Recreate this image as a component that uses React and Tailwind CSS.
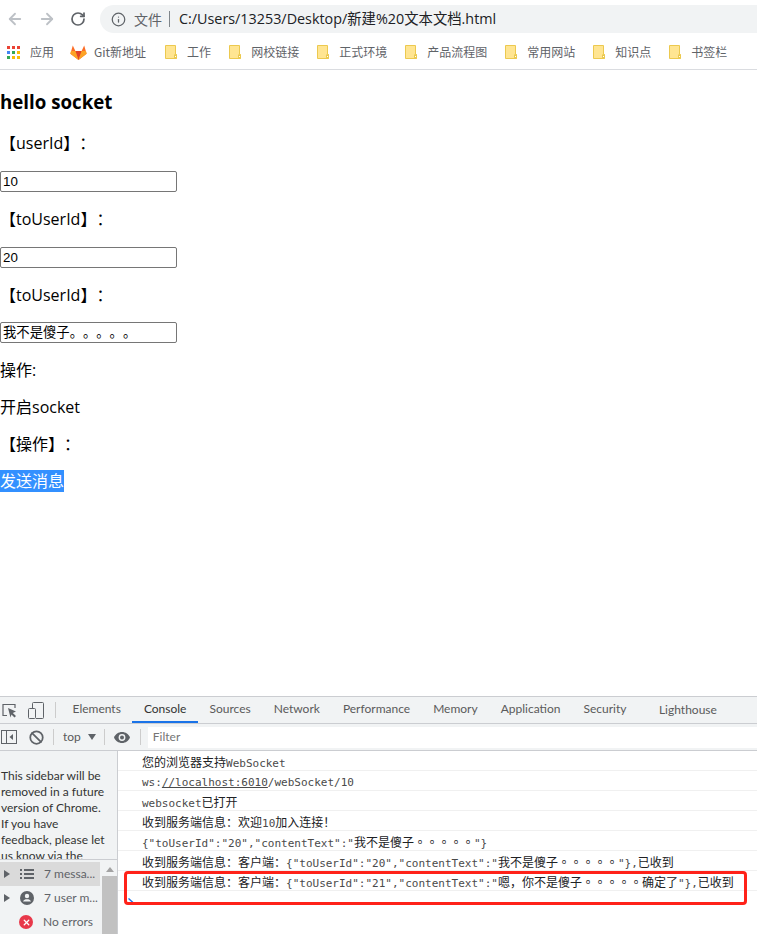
import { ArrowLeft, ArrowRight, RotateCw, Info, Ban, X } from "lucide-react";

const ui = "font-['Lato','Noto_Sans_CJK_SC',sans-serif]";
const cjk = "font-['Noto_Sans_CJK_SC',sans-serif] text-[12px]";
const mono = "font-['DejaVu_Sans_Mono',monospace] text-[11px]";

const bookmarks = ["工作", "网校链接", "正式环境", "产品流程图", "常用网站", "知识点", "书签栏"];
const tabs = ["Elements", "Console", "Sources", "Network", "Performance", "Memory", "Application", "Security"];
const sidebarLines = ["This sidebar will be", "removed in a future", "version of Chrome.", "If you have", "feedback, please let", "us know via the"];

function Folder() {
  return (
    <svg width="12" height="14" viewBox="0 0 12 14" className="shrink-0">
      <path d="M0.5 0.5H10.5V9.5H11.5V13.5H0.5Z" fill="#ffe592" stroke="#ecc94f" />
      <rect x="9.5" y="10" width="2" height="3" fill="#fff" stroke="#ecc94f" />
    </svg>
  );
}

function Apps() {
  const colors = ["#ea4335", "#ea4335", "#ea4335", "#4285f4", "#34a853", "#fbbc05", "#34a853", "#fbbc05", "#fbbc05"];
  return (
    <div className="grid grid-cols-3 gap-[2px] w-[13px] shrink-0">
      {colors.map((c, i) => (
        <div key={i} className="h-[3px]" style={{ background: c }} />
      ))}
    </div>
  );
}

function GitlabLogo() {
  return (
    <svg width="17" height="15" viewBox="0 0 17 15" className="shrink-0">
      <path d="M8.5 15L0.4 8.8 2.8 0.6 5.4 6H11.6L14.2 0.6 16.6 8.8Z" fill="#fc6d26" />
      <path d="M8.5 15L5.4 6H11.6Z" fill="#e24329" />
      <path d="M8.5 15L0.4 8.8 1 6H5.4Z" fill="#fca326" />
      <path d="M8.5 15L16.6 8.8 16 6H11.6Z" fill="#fca326" />
    </svg>
  );
}

function Caret() {
  return (
    <svg width="6" height="8" viewBox="0 0 6 8" className="shrink-0">
      <path d="M0 0L6 4 0 8Z" fill="#5f6368" />
    </svg>
  );
}

function Field({ value, className = "" }) {
  return (
    <input
      readOnly
      value={value}
      className={`block w-[177px] h-[21px] border border-[#767676] rounded-[2px] px-[2px] text-[13.33px] text-black font-['Liberation_Sans','Noto_Sans_CJK_SC',sans-serif] outline-none ${className}`}
    />
  );
}

function Row({ children }) {
  return <div className="h-[20px] pl-[24px] leading-[21px] border-b border-[#f0f0f0] whitespace-pre text-[#4a4a4a]">{children}</div>;
}

const C = ({ children }) => <span className={`${cjk} text-[#202124]`}>{children}</span>;
const M = ({ children }) => <span className={mono}>{children}</span>;
const Dots = () => <span className="font-['Noto_Sans_CJK_TC',sans-serif] text-[12px] text-[#202124]">。。。。。</span>;

export default function App() {
  return (
    <div className="h-[934px] w-[757px] flex flex-col overflow-hidden bg-white text-black [text-spacing-trim:space-all]">
      {/* browser toolbar */}
      <div className="h-[70px] shrink-0 border-b border-[#dadce0] font-['Open_Sans','Noto_Sans_CJK_SC',sans-serif]">
        <div className="h-[36px] pt-[5px] flex items-start">
          <div className="w-[100px] h-[28px] flex items-center pl-[6px] gap-[14px]">
            <ArrowLeft size={18} strokeWidth={2.4} className="text-[#bdc1c6]" />
            <ArrowRight size={18} strokeWidth={2.4} className="text-[#bdc1c6]" />
            <RotateCw size={16} strokeWidth={2.6} className="text-[#5f6368]" />
          </div>
          <div className="flex-1 h-[28px] bg-[#f1f3f4] rounded-l-[14px] flex items-center pl-[11px]">
            <Info size={15} className="text-[#5f6368]" />
            <span className="ml-[8px] text-[14px] text-[#5f6368] font-['Noto_Sans_CJK_SC',sans-serif]">文件</span>
            <div className="w-px h-[16px] bg-[#80868b] ml-[7px] mr-[9px]" />
            <span className="text-[#202124] text-[14.35px]">C:/Users/13253/Desktop/新建%20文本文档.html</span>
          </div>
        </div>
        <div className="h-[32px] flex items-center pl-[7px] text-[12px] text-[#5f6368] font-['Noto_Sans_CJK_SC',sans-serif]">
          <Apps />
          <span className="ml-[10px]">应用</span>
          <div className="ml-[16px]"><GitlabLogo /></div>
          <span className="ml-[7px] mr-[19px]">Git新地址</span>
          <div className="flex items-center gap-[18px]">
            {bookmarks.map((b) => (
              <div key={b} className="flex items-center gap-[10px]">
                <Folder />
                <span>{b}</span>
              </div>
            ))}
          </div>
        </div>
      </div>

      {/* page */}
      <div className="flex-1 min-h-0 pt-[19px] text-[16px] font-['Open_Sans','Noto_Sans_CJK_SC',sans-serif]">
        <h3 className="text-[18.72px] font-bold leading-[25px] mb-[19px]">hello socket</h3>
        <div className="flex flex-col gap-[17px] leading-[21px]">
          <p>【userId】：</p>
          <Field value="10" />
          <p>【toUserId】：</p>
          <Field value="20" />
          <p>【toUserId】：</p>
          <Field value="我不是傻子。。。。。" className="-mt-px" />
          <p>操作:</p>
          <p className="-mt-px">开启socket</p>
          <p className="-mt-px">【操作】：</p>
          <p className="-mt-px"><span className="bg-[#3390ff] text-white">发送消息</span></p>
        </div>
      </div>

      {/* devtools */}
      <div className={`h-[238px] shrink-0 border-t border-[#cbcdd1] flex flex-col text-[12px] ${ui}`}>
        <div className="h-[27px] shrink-0 bg-[#f1f3f4] border-b border-[#cbcdd1] flex items-center text-[#5a5a5a]">
          <div className="w-[61px] shrink-0 flex items-center pl-[2px] gap-[11px] h-full">
            <svg width="15" height="15" viewBox="0 0 15 15" fill="none" className="text-[#5f6368]">
              <path d="M5 12.5H1V1.5H13V5" stroke="currentColor" strokeWidth="1.2" />
              <path d="M6 5L14 8.5 10.8 10 14 13 12.5 14.5 9.5 11.5 8.5 14.5Z" fill="currentColor" />
            </svg>
            <svg width="16" height="17" viewBox="0 0 16 17" fill="none" className="text-[#5f6368]">
              <rect x="0.5" y="6.5" width="7" height="10" rx="1" stroke="currentColor" />
              <path d="M4.5 6V1.5A1 1 0 0 1 5.5 0.5H14.5A1 1 0 0 1 15.5 1.5V15.5A1 1 0 0 1 14.5 16.5H8" stroke="currentColor" />
            </svg>
            <div className="w-px h-[16px] bg-[#ccc]" />
          </div>
          {tabs.map((t) => (
            <div key={t} className={`h-full px-[11.5px] flex items-center border-b-2 ${t === "Console" ? "border-[#1a73e8] text-[#333]" : "border-transparent"}`}>{t}</div>
          ))}
          <div className="ml-[21px]">Lighthouse</div>
        </div>
        <div className="h-[27px] shrink-0 bg-[#f1f3f4] border-b border-[#cbcdd1] flex items-center text-[#5a5a5a]">
          <svg width="16" height="14" viewBox="0 0 16 14" fill="none" className="ml-[1px]">
            <rect x="0.5" y="0.5" width="15" height="13" stroke="#5f6368" />
            <path d="M5.5 0.5V13.5" stroke="#5f6368" />
            <path d="M12 4V10L8.5 7Z" fill="#5f6368" />
          </svg>
          <Ban size={15} strokeWidth={2.8} className="ml-[12px] text-[#5f6368]" />
          <div className="w-px h-[16px] bg-[#ccc] ml-[9px]" />
          <span className="ml-[9px]">top</span>
          <svg width="8" height="6" viewBox="0 0 8 6" className="ml-[7px]"><path d="M0 0H8L4 6Z" fill="#5f6368" /></svg>
          <div className="w-px h-[16px] bg-[#ccc] ml-[8px]" />
          <svg width="16" height="11" viewBox="0 0 16 11" className="ml-[9px]">
            <path d="M8 0C4.4 0 1.4 2.2 0 5.5 1.4 8.8 4.4 11 8 11S14.6 8.8 16 5.5C14.6 2.2 11.6 0 8 0Z" fill="#5f6368" />
            <circle cx="8" cy="5.5" r="3.4" fill="#f1f3f4" />
            <circle cx="8" cy="5.5" r="2" fill="#5f6368" />
          </svg>
          <div className="w-px h-[16px] bg-[#ccc] ml-[10px]" />
          <div className="ml-[7px] flex-1 h-[21px] bg-white flex items-center pl-[5px] text-[#757575]">Filter</div>
        </div>

        <div className="flex-1 min-h-0 flex">
          <div className="w-[118px] shrink-0 border-r border-[#cbcdd1] flex flex-col bg-[#f1f3f4]">
            <div className="h-[109px] shrink-0 overflow-hidden border-b border-[#cbcdd1] pt-[17px] pl-px leading-[16px] text-[#333] whitespace-nowrap">
              {sidebarLines.map((l) => (
                <div key={l}>{l}</div>
              ))}
            </div>
            <div className="flex-1 flex text-[#5f6368] pt-[2px]">
              <div className="w-[100px] shrink-0 flex flex-col">
                <div className="h-[24px] bg-[#dadada] flex items-center pl-[4px] gap-[10px]">
                  <Caret />
                  <svg width="14" height="10" viewBox="0 0 14 10" className="shrink-0">
                    <path d="M0 0H2V2H0ZM0 4H2V6H0ZM0 8H2V10H0ZM4 0H14V2H4ZM4 4H14V6H4ZM4 8H14V10H4Z" fill="#5f6368" />
                  </svg>
                  <span className="whitespace-nowrap">7 messa...</span>
                </div>
                <div className="h-[24px] flex items-center pl-[4px] gap-[10px]">
                  <Caret />
                  <svg width="14" height="14" viewBox="0 0 14 14" className="shrink-0">
                    <circle cx="7" cy="7" r="7" fill="#5f6368" />
                    <circle cx="7" cy="5" r="2.2" fill="#f1f3f4" />
                    <path d="M3 10.5C3.6 8.8 5.2 8.2 7 8.2S10.4 8.8 11 10.5Z" fill="#f1f3f4" />
                  </svg>
                  <span className="whitespace-nowrap">7 user m...</span>
                </div>
                <div className="h-[24px] flex items-center pl-[19px] gap-[10px]">
                  <div className="w-[14px] h-[14px] rounded-full bg-[#e8384a] flex items-center justify-center">
                    <X size={9} strokeWidth={3.5} className="text-white" />
                  </div>
                  <span className="whitespace-nowrap">No errors</span>
                </div>
              </div>
              <div className="w-[15px] ml-[2px] flex flex-col items-center">
                <svg width="8" height="5" viewBox="0 0 8 5" className="mt-[5px]"><path d="M0 5H8L4 0Z" fill="#a3a3a3" /></svg>
                <div className="w-full flex-1 bg-[#c1c1c1] mt-[4px]" />
              </div>
            </div>
          </div>

          <div className="relative flex-1 min-w-0 bg-white">
            <Row><C>您的浏览器支持</C><M>WebSocket</M></Row>
            <Row><M>ws:</M><span className={`${mono} underline`}>//localhost:6010</span><M>/webSocket/10</M></Row>
            <Row><M>websocket</M><C>已打开</C></Row>
            <Row><C>收到服务端信息：欢迎</C><M>10</M><C>加入连接！</C></Row>
            <Row><M>{'{"toUserId":"20","contentText":"'}</M><C>我不是傻子</C><Dots /><M>{'"}'}</M></Row>
            <Row><C>收到服务端信息：客户端：</C><M>{'{"toUserId":"20","contentText":"'}</M><C>我不是傻子</C><Dots /><M>{'"},'}</M><C>已收到</C></Row>
            <Row><C>收到服务端信息：客户端：</C><M>{'{"toUserId":"21","contentText":"'}</M><C>嗯，你不是傻子</C><Dots /><C>确定了</C><M>{'"},'}</M><C>已收到</C></Row>
            <svg width="6" height="6" viewBox="0 0 6 6" fill="none" className="ml-[10px] mt-[7px]">
              <path d="M0.5 0.5L5.5 5" stroke="#1a73e8" strokeWidth="1.4" />
            </svg>
            {/* red annotation over the last message */}
            <div className="absolute left-[6px] top-[120px] w-[623px] h-[34px] border-[3px] border-[#ff2219] rounded-[4px]" />
          </div>
        </div>
      </div>
    </div>
  );
}
